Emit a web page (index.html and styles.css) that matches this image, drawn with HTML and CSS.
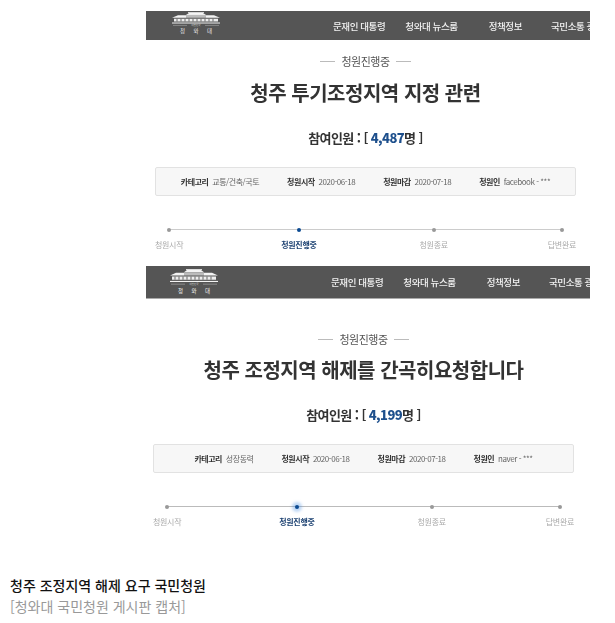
FILE: index.html
```html
<!DOCTYPE html>
<html lang="ko">
<head>
  <meta charset="UTF-8">
  <meta name="viewport" content="width=device-width, initial-scale=1.0">
  <title>청주 조정지역 해제 요구 국민청원</title>
  <link rel="stylesheet" href="styles.css">
</head>
<body>
  <!-- First petition capture -->
  <section class="capture capture-first">
    <header class="site-bar">
      <svg class="logo" viewBox="0 0 48 24" preserveAspectRatio="none" aria-hidden="true">
        <rect x="16" y="0" width="16" height="1" fill="#ddd"/>
        <path d="M14 3 L17 1 H31 L34 3 Z" fill="#f4f4f4"/>
        <path d="M0 6 L6 3.500 H14 V6 Z M48 6 L42 3.500 H34 V6 Z" fill="#f4f4f4"/>
        <rect x="14" y="3" width="20" height="3" fill="#bbb"/>
        <path d="M2 7 H46 V10 H2 Z" fill="#eee"/>
        <path d="M5 7 V10 M9 7 V10 M13 7 V10 M17 7 V10 M21 7 V10 M25 7 V10 M29 7 V10 M33 7 V10 M37 7 V10 M41 7 V10" stroke="#666" stroke-width="1"/>
        <rect x="0" y="11" width="48" height="1" fill="#f4f4f4"/>
        <path d="M1 14 H15 M33 14 H47" stroke="#bbb" stroke-width=".5"/>
        <text class="logo-small" x="24" y="15">대한민국</text>
        <text class="logo-name" x="24" y="22">청 와 대</text>
      </svg>
      <nav class="site-nav">
        <a class="nav-item">문재인 대통령</a>
        <a class="nav-item">청와대 뉴스룸</a>
        <a class="nav-item">정책정보</a>
        <a class="nav-item">국민소통 광장</a>
      </nav>
    </header>
    <div class="petition">
      <div class="status"><span>청원진행중</span></div>
      <h1 class="petition-title">청주 투기조정지역 지정 관련</h1>
      <p class="count">참여인원 : [ <b>4,487</b>명 ]</p>
      <ul class="info-bar">
        <li class="info-item"><strong>카테고리</strong> 교통/건축/국토</li>
        <li class="info-item"><strong>청원시작</strong> 2020-06-18</li>
        <li class="info-item"><strong>청원마감</strong> 2020-07-18</li>
        <li class="info-item"><strong>청원인</strong> facebook - ***</li>
      </ul>
      <div class="steps">
        <div class="step"><i class="dot"></i>청원시작</div>
        <div class="step step-active"><i class="dot"></i>청원진행중</div>
        <div class="step"><i class="dot"></i>청원종료</div>
        <div class="step"><i class="dot"></i>답변완료</div>
      </div>
    </div>
  </section>

  <!-- Second petition capture -->
  <section class="capture capture-second">
    <header class="site-bar">
      <svg class="logo" viewBox="0 0 48 24" preserveAspectRatio="none" aria-hidden="true">
        <rect x="16" y="0" width="16" height="1" fill="#ddd"/>
        <path d="M14 3 L17 1 H31 L34 3 Z" fill="#f4f4f4"/>
        <path d="M0 6 L6 3.500 H14 V6 Z M48 6 L42 3.500 H34 V6 Z" fill="#f4f4f4"/>
        <rect x="14" y="3" width="20" height="3" fill="#bbb"/>
        <path d="M2 7 H46 V10 H2 Z" fill="#eee"/>
        <path d="M5 7 V10 M9 7 V10 M13 7 V10 M17 7 V10 M21 7 V10 M25 7 V10 M29 7 V10 M33 7 V10 M37 7 V10 M41 7 V10" stroke="#666" stroke-width="1"/>
        <rect x="0" y="11" width="48" height="1" fill="#f4f4f4"/>
        <path d="M1 14 H15 M33 14 H47" stroke="#bbb" stroke-width=".5"/>
        <text class="logo-small" x="24" y="15">대한민국</text>
        <text class="logo-name" x="24" y="22">청 와 대</text>
      </svg>
      <nav class="site-nav">
        <a class="nav-item">문재인 대통령</a>
        <a class="nav-item">청와대 뉴스룸</a>
        <a class="nav-item">정책정보</a>
        <a class="nav-item">국민소통 광장</a>
      </nav>
    </header>
    <div class="petition">
      <div class="status"><span>청원진행중</span></div>
      <h1 class="petition-title">청주 조정지역 해제를 간곡히요청합니다</h1>
      <p class="count">참여인원 : [ <b>4,199</b>명 ]</p>
      <ul class="info-bar">
        <li class="info-item"><strong>카테고리</strong> 성장동력</li>
        <li class="info-item"><strong>청원시작</strong> 2020-06-18</li>
        <li class="info-item"><strong>청원마감</strong> 2020-07-18</li>
        <li class="info-item"><strong>청원인</strong> naver - ***</li>
      </ul>
      <div class="steps">
        <div class="step"><i class="dot"></i>청원시작</div>
        <div class="step step-active"><i class="dot"></i>청원진행중</div>
        <div class="step"><i class="dot"></i>청원종료</div>
        <div class="step"><i class="dot"></i>답변완료</div>
      </div>
    </div>
  </section>

  <!-- Caption -->
  <div class="caption">
    <p class="caption-title">청주 조정지역 해제 요구 국민청원</p>
    <p class="caption-source">[청와대 국민청원 게시판 캡처]</p>
  </div>
</body>
</html>
```

FILE: styles.css
```css
body {
  margin: 0;
  padding-top: 11px;
  background: #fff;
  font-family: "Noto Sans CJK KR", "Noto Sans", sans-serif;
  color: #333;
}

/* Screenshot panels */
.capture {
  width: 444px;
  margin-left: 146px;
  overflow: hidden;
  filter: blur(0.3px);
}

.capture-first {
  margin-bottom: 15px;
}

.capture-second {
  margin-bottom: 47px;
}

/* Top bar */
.site-bar {
  display: flex;
  align-items: center;
  height: 29px;
  padding-left: 26px;
  background: #555;
}

.capture-second .site-bar {
  height: 32px;
  padding-left: 24px;
  border-bottom: 1px solid #aaa;
}

.logo {
  flex: none;
  align-self: flex-start;
  width: 48px;
  height: 23px;
  margin-top: 1px;
}

.capture-second .logo {
  height: 26px;
  margin-top: 3px;
}

.logo-small {
  font-size: 2.500px;
  fill: #ccc;
  text-anchor: middle;
}

.logo-name {
  font-size: 5.500px;
  word-spacing: 7px;
  fill: #eee;
  text-anchor: middle;
}

.site-nav {
  display: flex;
  margin-left: 113px;
  white-space: nowrap;
}

.nav-item {
  flex: none;
  font-size: 9.500px;
  font-weight: 500;
  letter-spacing: -0.4px;
  color: #f2f2f2;
}

.nav-item:nth-child(2) {
  margin-left: 20px;
}

.nav-item:nth-child(3) {
  margin-left: 31px;
}

.nav-item:nth-child(4) {
  margin-left: 29px;
}

/* Petition body */
.petition {
  padding-left: 9px;
  width: 421px;
}

.capture-second .petition {
  padding-left: 7px;
}

.status {
  display: flex;
  justify-content: center;
  align-items: center;
  gap: 6px;
  margin-top: 13px;
  font-size: 11px;
  line-height: 16px;
  letter-spacing: -0.5px;
  color: #555;
}

.capture-second .status {
  margin-top: 32px;
}

.status::before,
.status::after {
  content: "";
  width: 15px;
  height: 1px;
  background: #bbb;
}

.petition-title {
  margin: 9px 0 0;
  font-size: 20px;
  font-weight: 700;
  line-height: 30px;
  letter-spacing: -0.48px;
  text-align: center;
  color: #333;
}

.capture-second .petition-title {
  margin-top: 8px;
}

.count {
  margin: 20px 0 0;
  font-size: 13px;
  font-weight: 700;
  line-height: 20px;
  letter-spacing: -0.6px;
  text-align: center;
}

.count b {
  color: #1d4f8c;
}

/* Category, dates, author */
.info-bar {
  display: flex;
  justify-content: center;
  gap: 28px;
  height: 27px;
  margin: 19px 0 0;
  padding: 0;
  list-style: none;
  background: #f7f7f7;
  border: 1px solid #e2e2e2;
  border-radius: 2px;
}

.info-item {
  font-size: 8px;
  line-height: 27px;
  letter-spacing: -0.45px;
  color: #666;
  white-space: nowrap;
}

.info-item strong {
  margin-right: 2px;
  color: #333;
}

/* Progress steps */
.steps {
  display: flex;
  position: relative;
  margin-top: 30px;
}

.steps::before {
  content: "";
  position: absolute;
  top: 3px;
  left: 14px;
  right: 14px;
  height: 1px;
  background: #ccc;
}

.capture-second .steps::before {
  background: #bbb;
}

.step {
  display: flex;
  flex-direction: column;
  align-items: center;
  gap: 5px;
  position: relative;
  font-size: 8px;
  line-height: 12px;
  letter-spacing: -0.3px;
  color: #aaa;
  white-space: nowrap;
}

.step:nth-child(2) {
  margin-left: 98px;
}

.step:nth-child(3) {
  margin-left: 103px;
}

.step:nth-child(4) {
  margin-left: 100px;
}

.step-active {
  font-weight: 700;
  color: #1d4272;
}

.dot {
  width: 4px;
  height: 4px;
  margin: 2px 0;
  border-radius: 50%;
  background: #999;
}

.step-active .dot {
  background: #0b4a92;
}

.capture-second .step-active .dot {
  box-shadow: 0 0 3px 3px rgba(70, 140, 225, 0.35);
}

/* Caption */
.caption {
  padding-left: 10px;
  font-size: 14px;
  line-height: 21px;
}

.caption p {
  margin: 0;
}

.caption-title {
  font-weight: 500;
  color: #111;
}

.caption-source {
  color: #999;
}
```
